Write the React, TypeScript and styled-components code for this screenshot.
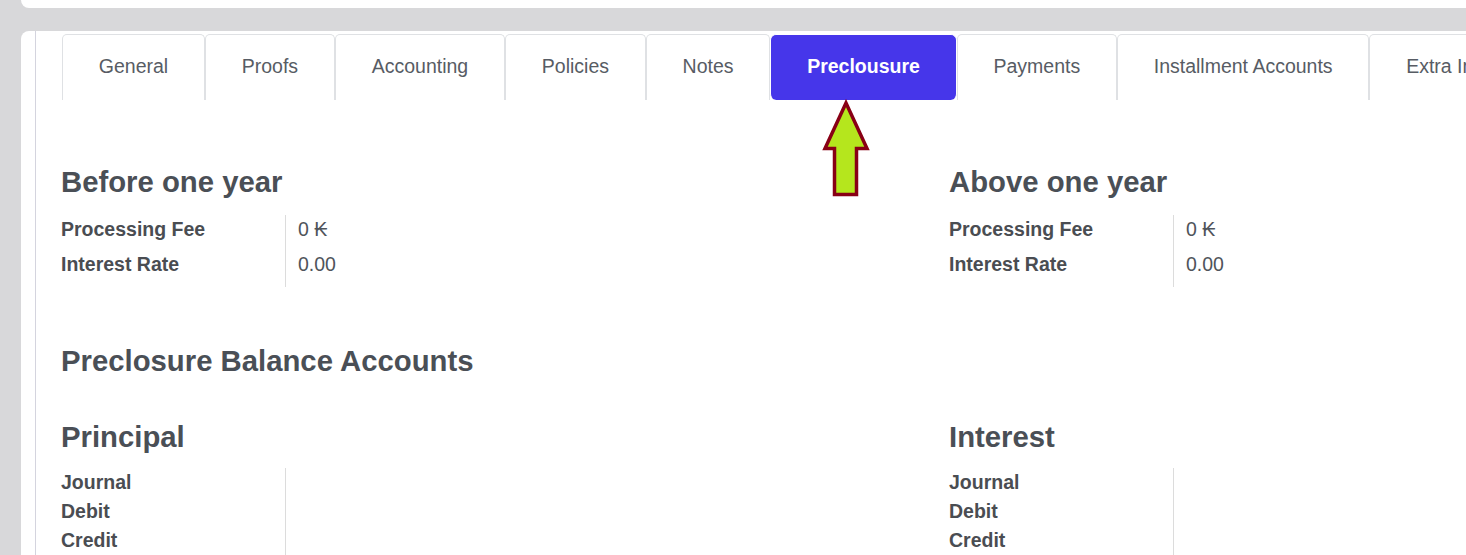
import styled, { createGlobalStyle } from "styled-components";

const GlobalStyle = createGlobalStyle`
    html, body {
        margin: 0;
        padding: 0;
        background: #d8d8da;
        overflow: hidden;
    }
    body {
        font-family: "Liberation Sans", Arial, sans-serif;
    }
`;

const Page = styled.div`
    display: flex;
    flex-direction: column;
    height: 555px;
    padding-left: 21px;
    overflow: hidden;
`;

const TopStrip = styled.div`
    height: 8px;
    flex-shrink: 0;
    background: #ffffff;
    border-bottom-left-radius: 8px;
`;

const Card = styled.div`
    flex: 1;
    display: flex;
    margin-top: 23px;
    padding-left: 14px;
    background: #ffffff;
    border-top-left-radius: 8px;
    min-width: 0;
    min-height: 0;
    overflow: hidden;
`;

const Sheet = styled.div`
    position: relative;
    flex: 1;
    min-width: 0;
    padding: 3px 0 0 25px;
    border-left: 1px solid #d4d4de;
`;

const Tabs = styled.div`
    display: flex;
    margin-left: 1px;
`;

const Tab = styled.div<{ $active?: boolean }>`
    flex-shrink: 0;
    white-space: nowrap;
    padding: 0 35.8px 3px;
    line-height: 62px;
    font-size: 19.5px;
    color: ${(props) => (props.$active ? "#ffffff" : "#575c64")};
    font-weight: ${(props) => (props.$active ? "bold" : "normal")};
    background: ${(props) => (props.$active ? "#4636ea" : "#ffffff")};
    border: 1px solid ${(props) => (props.$active ? "#ffffff" : "#dfe1e4")};
    border-bottom: none;
    border-radius: ${(props) => (props.$active ? "6px" : "5px 5px 0 0")};
`;

const Arrow = styled.svg`
    position: absolute;
    left: 786px;
    top: 68px;
`;

const Columns = styled.div<{ $top: number }>`
    display: grid;
    grid-template-columns: 888px 888px;
    margin-top: ${(props) => props.$top}px;
`;

const Heading = styled.h2<{ $gap?: number }>`
    margin: 0 0 ${(props) => props.$gap ?? 16}px;
    font-size: 29.3px;
    line-height: 35px;
    font-weight: bold;
    color: #4a4f56;
    white-space: nowrap;
`;

const SectionTitle = styled(Heading)`
    margin: 55.5px 0 0;
`;

const Row = styled.div<{ $pad: number }>`
    display: flex;
    font-size: 19.5px;
    line-height: 28px;
    color: #4a4d52;

    & > * {
        padding-bottom: ${(props) => props.$pad}px;
    }
    &:last-child > * {
        padding-bottom: ${(props) => props.$pad + 2}px;
    }
`;

const Label = styled.div`
    width: 224px;
    flex-shrink: 0;
    font-weight: bold;
    white-space: nowrap;
`;

const Value = styled.div`
    flex: 1;
    padding-left: 12px;
    border-left: 1px solid #dcdcdc;
    color: #4f545b;
`;

type Field = { label: string; value?: string };

type GroupProps = { title: string; fields: Field[]; pad: number; gap?: number };

function FieldGroup({ title, fields, pad, gap }: GroupProps) {
    return (
        <div>
            <Heading $gap={gap}>{title}</Heading>
            <div>
                {fields.map((f) => (
                    <Row key={f.label} $pad={pad}>
                        <Label>{f.label}</Label>
                        <Value>{f.value}</Value>
                    </Row>
                ))}
            </div>
        </div>
    );
}

const tabs = [
    "General",
    "Proofs",
    "Accounting",
    "Policies",
    "Notes",
    "Preclousure",
    "Payments",
    "Installment Accounts",
    "Extra Info",
];

const feeFields: Field[] = [
    { label: "Processing Fee", value: "0 \u20AD" },
    { label: "Interest Rate", value: "0.00" },
];

const accountFields: Field[] = [{ label: "Journal" }, { label: "Debit" }, { label: "Credit" }];

export default function App() {
    return (
        <>
            <GlobalStyle />
            <Page>
                <TopStrip />
                <Card>
                    <Sheet>
                        <Tabs>
                            {tabs.map((t) => (
                                <Tab key={t} $active={t === "Preclousure"}>
                                    {t}
                                </Tab>
                            ))}
                        </Tabs>

                        <Columns $top={64}>
                            <FieldGroup title="Before one year" fields={feeFields} pad={7} />
                            <FieldGroup title="Above one year" fields={feeFields} pad={7} />
                        </Columns>

                        <SectionTitle>Preclosure Balance Accounts</SectionTitle>

                        <Columns $top={41}>
                            <FieldGroup title="Principal" fields={accountFields} pad={1} gap={14} />
                            <FieldGroup title="Interest" fields={accountFields} pad={1} gap={14} />
                        </Columns>

                        <Arrow width="48" height="99" viewBox="0 0 48 99">
                            <path
                                d="M24 4 L45 49.5 L34.5 49.5 L34.5 95.5 L12.5 95.5 L12.5 49.5 L3 49.5 Z"
                                fill="#b5e61d"
                                stroke="#880015"
                                strokeWidth="3.5"
                                strokeLinejoin="miter"
                            />
                        </Arrow>
                    </Sheet>
                </Card>
            </Page>
        </>
    );
}
